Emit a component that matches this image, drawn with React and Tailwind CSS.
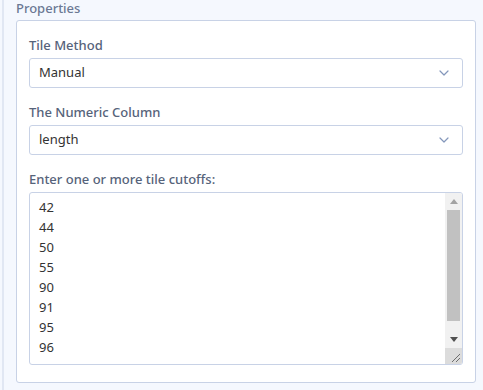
import { ChevronDown } from 'lucide-react';

const cutoffs = ['42', '44', '50', '55', '90', '91', '95', '96'];

function SelectField({ label, value }) {
  return (
    <div className="flex flex-col gap-[4px]">
      <label className="text-[13px] font-medium leading-[18px] text-[#56637a]">{label}</label>
      <div className="flex h-[30px] items-center justify-between rounded-[3px] border border-[#c8d2e6] bg-white pl-[9px] pr-[10px]">
        <span className="text-[13px] text-[#333]">{value}</span>
        <ChevronDown size={16} strokeWidth={1.8} className="text-[#8497bb]" />
      </div>
    </div>
  );
}

function FakeScrollbar() {
  return (
    <div className="flex w-[17px] flex-col bg-[#f1f1f1]">
      <div className="flex h-[17px] items-center justify-center">
        <svg width="8" height="5" viewBox="0 0 8 5">
          <path d="M0 5 L4 0 L8 5 Z" fill="#a3a3a3" />
        </svg>
      </div>
      <div className="flex flex-1 flex-col px-[2px] pb-[10px]">
        <div className="h-[111px] bg-[#c1c1c1]" />
      </div>
      <div className="flex h-[17px] items-center justify-center">
        <svg width="8" height="5" viewBox="0 0 8 5">
          <path d="M0 0 L8 0 L4 5 Z" fill="#505050" />
        </svg>
      </div>
      <div className="flex h-[16px] items-end justify-end bg-[#dcdcdc] p-[2px]">
        <svg width="9" height="9" viewBox="0 0 9 9">
          <path d="M9 1 L1 9 M9 5 L5 9" stroke="#6e6e6e" strokeWidth="1" />
        </svg>
      </div>
    </div>
  );
}

export default function App() {
  return (
    <div
      className="h-[390px] w-[483px] overflow-hidden bg-[#f5f8fe] pl-[2px]"
      style={{ fontFamily: '"Noto Sans", "Open Sans", sans-serif' }}
    >
      <div className="h-full border-l-[2px] border-[#e1e7f3] pl-[12px] pr-[7px]">
        <div className="text-[13px] font-medium leading-[16px] text-[#6b7894]">Properties</div>
        <div className="mt-[4px] flex flex-col gap-[15px] rounded-[3px] border border-[#c8d2e6] bg-white px-[12px] pb-[17px] pt-[15px]">
          <SelectField label="Tile Method" value="Manual" />
          <SelectField label="The Numeric Column" value="length" />
          <div className="flex flex-col gap-[4px]">
            <label className="text-[13px] font-medium leading-[18px] text-[#56637a]">
              Enter one or more tile cutoffs:
            </label>
            <div className="flex h-[173px] overflow-hidden rounded-[3px] border border-[#c8d2e6] bg-white">
              <div className="flex flex-1 flex-col px-[9px] py-[4px] text-[13px] leading-[20px] text-[#333]">
                {cutoffs.map((c) => (
                  <div key={c}>{c}</div>
                ))}
              </div>
              <FakeScrollbar />
            </div>
          </div>
        </div>
      </div>
    </div>
  );
}
